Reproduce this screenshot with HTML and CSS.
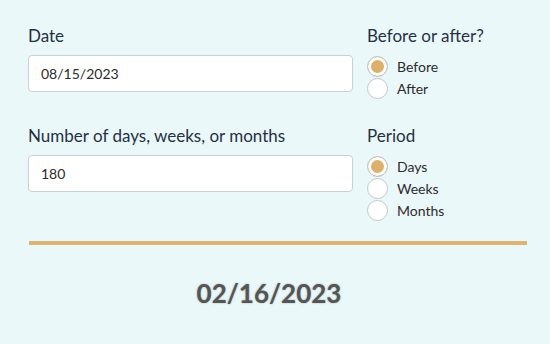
FILE: index.html
```html
<!DOCTYPE html>
<html>
<head>
<meta charset="utf-8">
<link rel="stylesheet" href="styles.css">
</head>
<body>
<div class="page">
  <div class="row row-first">
    <div class="field">
      <div class="label">Date</div>
      <div class="input">08/15/2023</div>
    </div>
    <div class="group">
      <div class="label">Before or after?</div>
      <div class="option"><span class="radio checked"></span><span>Before</span></div>
      <div class="option"><span class="radio"></span><span>After</span></div>
    </div>
  </div>
  <div class="row">
    <div class="field">
      <div class="label">Number of days, weeks, or months</div>
      <div class="input">180</div>
    </div>
    <div class="group">
      <div class="label">Period</div>
      <div class="option"><span class="radio checked"></span><span>Days</span></div>
      <div class="option"><span class="radio"></span><span>Weeks</span></div>
      <div class="option"><span class="radio"></span><span>Months</span></div>
    </div>
  </div>
  <div class="divider"></div>
  <div class="result">02/16/2023</div>
</div>
</body>
</html>
```

FILE: styles.css
```css
html, body {
  margin: 0;
  padding: 0;
  background: #ebf8fa;
}
body {
  font-family: "Lato", "Liberation Sans", sans-serif;
  color: #253044;
}
.page {
  width: 550px;
  height: 344px;
  box-sizing: border-box;
  padding: 25px 23px 0 28px;
}
.row {
  display: flex;
  gap: 14px;
  align-items: flex-start;
}
.row-first {
  margin-bottom: 26px;
}
.field {
  width: 325px;
  flex: none;
}
.label {
  font-size: 17px;
  line-height: 22px;
  height: 22px;
  margin-bottom: 8px;
}
.input {
  box-sizing: border-box;
  height: 37px;
  background: #fff;
  border: 1px solid #c9d0d4;
  border-radius: 4px;
  padding: 0 12px;
  font-size: 14px;
  line-height: 35px;
  color: #2b2b2b;
}
.option {
  display: flex;
  align-items: center;
  gap: 9px;
  height: 22px;
  font-size: 14px;
  color: #2b2b2b;
}
.radio {
  box-sizing: border-box;
  width: 21px;
  height: 21px;
  border-radius: 50%;
  border: 1px solid #c3c7ca;
  background: #fff;
  flex: none;
}
.radio.checked {
  background: #dcb16c;
  box-shadow: inset 0 0 0 3px #fff;
}
.divider {
  height: 4px;
  background: #dcb472;
  margin: 20px 0 0 1px;
  width: 498px;
}
.result {
  text-align: center;
  font-size: 26px;
  font-weight: 700;
  line-height: 32px;
  margin-top: 32px;
  margin-right: 17px;
  color: #555;
  text-shadow: 0 0 2px rgba(0,0,0,0.35);
}
```
